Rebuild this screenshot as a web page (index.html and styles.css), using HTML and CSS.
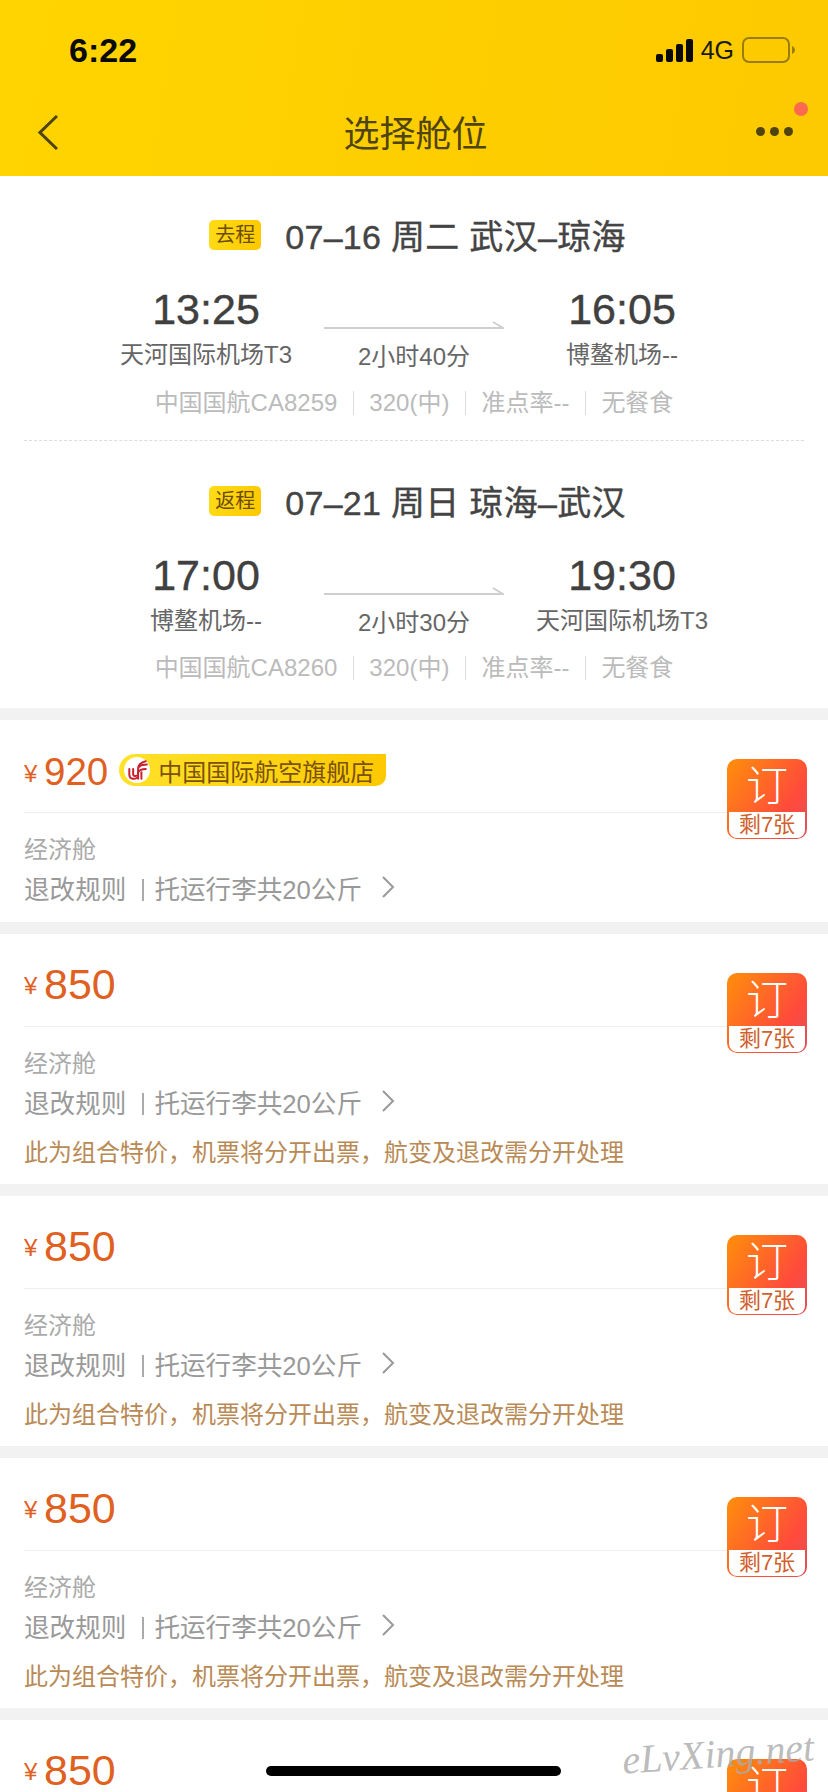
FILE: index.html
```html
<!DOCTYPE html>
<html lang="zh-CN">
<head>
  <meta charset="UTF-8">
  <title>选择舱位</title>
  <link rel="stylesheet" href="styles.css">
</head>
<body>

<header class="top">
  <div class="status">
    <span class="clock">6:22</span>
    <div class="status-right">
      <svg class="signal" width="37" height="23" viewBox="0 0 37 23">
        <rect x="0" y="15" width="7" height="8" rx="2"/>
        <rect x="10" y="10" width="7" height="13" rx="2"/>
        <rect x="20" y="5" width="7" height="18" rx="2"/>
        <rect x="30" y="0" width="7" height="23" rx="2"/>
      </svg>
      <span class="net">4G</span>
      <svg class="battery" width="54" height="26" viewBox="0 0 54 26">
        <rect x="1" y="1" width="46" height="24" rx="6" fill="none" stroke="#9a7d10" stroke-width="2"/>
        <path d="M50 9c2 1 3 2.500 3 4s-1 3-3 4z" fill="#9a7d10"/>
      </svg>
    </div>
  </div>
  <nav class="nav">
    <svg class="back" width="20" height="35" viewBox="0 0 20 35">
      <polyline points="19,1 2,17.500 19,34" fill="none" stroke="#4f4310" stroke-width="3"/>
    </svg>
    <h1>选择舱位</h1>
    <div class="more">
      <i></i><i></i><i></i>
      <b class="dot"></b>
    </div>
  </nav>
</header>

<section class="trips">
  <div class="trip trip-first">
    <div class="trip-title"><span class="tag">去程</span>07–16 周二 武汉–琼海</div>
    <div class="legs">
      <div class="stop"><div class="time">13:25</div><div class="airport">天河国际机场T3</div></div>
      <div class="mid">
        <svg width="180" height="8" viewBox="0 0 180 8"><polyline points="0,7 179,7 169,1" fill="none" stroke="#cfcfcf" stroke-width="2"/></svg>
        <div class="dur">2小时40分</div>
      </div>
      <div class="stop"><div class="time">16:05</div><div class="airport">博鳌机场--</div></div>
    </div>
    <div class="info"><span>中国国航CA8259</span><span>320(中)</span><span>准点率--</span><span>无餐食</span></div>
  </div>
  <div class="trip">
    <div class="trip-title"><span class="tag">返程</span>07–21 周日 琼海–武汉</div>
    <div class="legs">
      <div class="stop"><div class="time">17:00</div><div class="airport">博鳌机场--</div></div>
      <div class="mid">
        <svg width="180" height="8" viewBox="0 0 180 8"><polyline points="0,7 179,7 169,1" fill="none" stroke="#cfcfcf" stroke-width="2"/></svg>
        <div class="dur">2小时30分</div>
      </div>
      <div class="stop"><div class="time">19:30</div><div class="airport">天河国际机场T3</div></div>
    </div>
    <div class="info"><span>中国国航CA8260</span><span>320(中)</span><span>准点率--</span><span>无餐食</span></div>
  </div>
</section>

<div class="fare-list" id="fareList"></div>

<div class="watermark">eLvXing.net</div>
<div class="home-bar"></div>

<script>
  const fares = [
    { price: 920, flagship: true, combo: false },
    { price: 850, flagship: false, combo: true },
    { price: 850, flagship: false, combo: true },
    { price: 850, flagship: false, combo: true },
    { price: 850, flagship: false, combo: true }
  ];

  const list = document.getElementById("fareList");

  fares.forEach(f => {
    const div = document.createElement("div");
    div.className = "fare";
    div.innerHTML = `
      <div class="fare-main">
        <div class="price-row ${f.flagship ? "price-row-flagship" : ""}">
          <span class="yen">¥</span><span class="price">${f.price}</span>
          ${f.flagship ? `<span class="flagship">
            <span class="flagship-logo">
              <svg width="22" height="22" viewBox="0 0 20 20" fill="none" stroke="#c8202f" stroke-width="1.800" stroke-linecap="round">
                <path d="M3 9v5c0 4 4 5 7 3"/>
                <path d="M6.500 9v5c0 1.500 2 2 3.500 1"/>
                <path d="M11 18V9c0-4 3-6 7-7"/>
                <path d="M14 18V12"/>
                <path d="M11 12c1-2 4-3 7-3"/>
                <path d="M12 7c1-1 4-2 7-2"/>
              </svg>
            </span>中国国际航空旗舰店</span>` : ""}
        </div>
        <div class="cabin">经济舱</div>
        <div class="rules">
          <span>退改规则</span><i class="rules-sep"></i><span>托运行李共20公斤</span>
          <svg class="chevron" width="13" height="22" viewBox="0 0 13 22"><polyline points="1,1 11,11 1,21" fill="none" stroke="#999" stroke-width="2"/></svg>
        </div>
        ${f.combo ? `<div class="combo">此为组合特价，机票将分开出票，航变及退改需分开处理</div>` : ""}
      </div>
      <div class="book">
        <div class="book-word">订</div>
        <div class="book-left">剩7张</div>
      </div>
    `;
    list.appendChild(div);
  });
</script>
</body>
</html>
```

FILE: styles.css
```css
* {
  box-sizing: border-box;
}
html, body {
  height: 1792px;
  overflow: hidden;
}
body {
  margin: 0;
  position: relative;
  background: #f2f2f2;
  font-family: "Liberation Sans", "Noto Sans CJK SC", sans-serif;
  color: #444;
}
.top {
  height: 176px;
  background: linear-gradient(100deg, #ffd400, #fdc900);
}
.status {
  height: 86px;
  padding: 28px 32px 14px 69px;
  display: flex;
  justify-content: space-between;
  align-items: center;
}
.clock {
  font-size: 34px;
  font-weight: 700;
  color: #0a0a0a;
}
.status-right {
  display: flex;
  align-items: center;
  gap: 8px;
}
.signal {
  fill: #0a0a0a;
}
.net {
  font-size: 25px;
  color: #1a1a0a;
}
.nav {
  height: 90px;
  padding: 0 35px 0 38px;
  display: grid;
  grid-template-columns: 1fr auto 1fr;
  align-items: center;
}
.nav h1 {
  margin: 0;
  font-size: 36px;
  font-weight: 400;
  color: #4f4310;
}
.back {
  margin-top: 3px;
}
.more {
  display: flex;
  justify-content: flex-end;
  gap: 5px;
  position: relative;
}
.more i {
  width: 9px;
  height: 9px;
  border-radius: 50%;
  background: #4f4310;
}
.more .dot {
  position: absolute;
  top: -25px;
  right: -15px;
  width: 14px;
  height: 14px;
  border-radius: 50%;
  background: #fb6a4f;
}
.trips {
  background: #fff;
  margin-bottom: 12px;
}
.trip {
  padding: 39px 24px 25px;
}
.trip-first {
  padding: 38px 24px 23px;
  position: relative;
}
.trip-first::after {
  content: "";
  position: absolute;
  left: 24px;
  right: 24px;
  bottom: 0;
  border-bottom: 1px dashed #ddd;
}
.trip-title {
  height: 40px;
  padding-left: 7px;
  display: flex;
  justify-content: center;
  align-items: center;
  font-size: 34px;
  letter-spacing: 0.3px;
  -webkit-text-stroke: 0.4px #444;
  white-space: pre;
  color: #444;
}
.tag {
  width: 52px;
  height: 30px;
  margin: 2px 24px 0 0;
  border-radius: 5px;
  background: linear-gradient(100deg, #ffdc17, #fdc800);
  color: #6b4c08;
  font-size: 20px;
  letter-spacing: 0;
  -webkit-text-stroke: 0;
  line-height: 30px;
  text-align: center;
}
.legs {
  margin-top: 33px;
  display: grid;
  grid-template-columns: repeat(3, 208px);
  justify-content: center;
}
.stop {
  text-align: center;
}
.time {
  font-size: 43px;
  line-height: 44px;
  color: #404040;
  -webkit-text-stroke: 0.4px #404040;
}
.airport {
  margin-top: 9px;
  font-size: 24px;
  line-height: 30px;
  color: #666;
  white-space: nowrap;
}
.mid {
  padding-top: 34px;
  text-align: center;
}
.mid svg {
  display: block;
  margin: 0 auto;
}
.dur {
  margin-top: 13px;
  font-size: 24px;
  line-height: 30px;
  color: #666;
}
.info {
  margin-top: 15px;
  display: flex;
  justify-content: center;
  font-size: 24px;
  line-height: 30px;
  color: #bbb;
}
.trip-first .info {
  margin-top: 16px;
}
.info span + span {
  margin-left: 16px;
  padding-left: 16px;
  background: linear-gradient(#ddd, #ddd) left center / 1px 24px no-repeat;
}
.fare {
  background: #fff;
  margin-bottom: 12px;
  padding-left: 24px;
  display: flex;
  align-items: flex-start;
}
.fare-main {
  flex: 1;
  min-width: 0;
  padding-bottom: 16px;
}
.price-row {
  height: 93px;
  padding-top: 30px;
  display: flex;
  align-items: flex-start;
  border-bottom: 1px solid #eee;
  color: #e0611f;
}
.price-row-flagship {
  padding-top: 32px;
}
.yen {
  width: 20px;
  font-size: 24px;
  line-height: 44px;
}
.price {
  font-size: 43px;
  line-height: 40px;
}
.price-row-flagship .price {
  font-size: 38.5px;
}
.flagship {
  height: 32px;
  margin: 2px 0 0 11px;
  padding-right: 12px;
  display: flex;
  align-items: center;
  border-radius: 16px 0 10px 16px;
  background: linear-gradient(100deg, #ffe22a, #fdc800);
  color: #7a5208;
  font-size: 24px;
}
.flagship-logo {
  width: 26px;
  height: 26px;
  margin: 0 8px 0 5px;
  border-radius: 50%;
  background: #fff;
  display: flex;
  align-items: center;
  justify-content: center;
}
.cabin {
  margin-top: 22px;
  font-size: 24px;
  line-height: 30px;
  color: #aaa;
}
.rules {
  margin: 7px 0 4px;
  height: 30px;
  display: flex;
  align-items: center;
  font-size: 25.6px;
  color: #999;
}
.rules-sep {
  width: 2px;
  height: 22px;
  margin: 5px 10px 0 16px;
  background: #aaa;
}
.chevron {
  margin-left: 20px;
}
.combo {
  margin-top: 22px;
  font-size: 24px;
  line-height: 30px;
  color: #b98a55;
}
.book {
  width: 80px;
  height: 80px;
  margin: 39px 21px 0 0;
  padding: 0 2px 2px;
  border-radius: 10px;
  background: linear-gradient(125deg, #ff8f0a, #ff4a3c 70%, #e0505a);
  display: flex;
  flex-direction: column;
  flex-shrink: 0;
}
.book-word {
  height: 53px;
  color: #fff;
  font-size: 42px;
  font-weight: 300;
  line-height: 56px;
  text-align: center;
}
.book-left {
  flex: 1;
  background: #fff;
  border-radius: 0 0 8px 8px;
  color: #d0602c;
  font-size: 22px;
  line-height: 26px;
  text-align: center;
}
.watermark {
  position: absolute;
  left: 622px;
  top: 1730px;
  font-family: "Liberation Serif", serif;
  font-style: italic;
  font-size: 40px;
  color: rgba(170, 170, 170, 0.8);
  transform: rotate(-4deg);
  white-space: nowrap;
}
.home-bar {
  position: absolute;
  left: 266px;
  top: 1766px;
  width: 295px;
  height: 10px;
  border-radius: 5px;
  background: #000;
}
```
